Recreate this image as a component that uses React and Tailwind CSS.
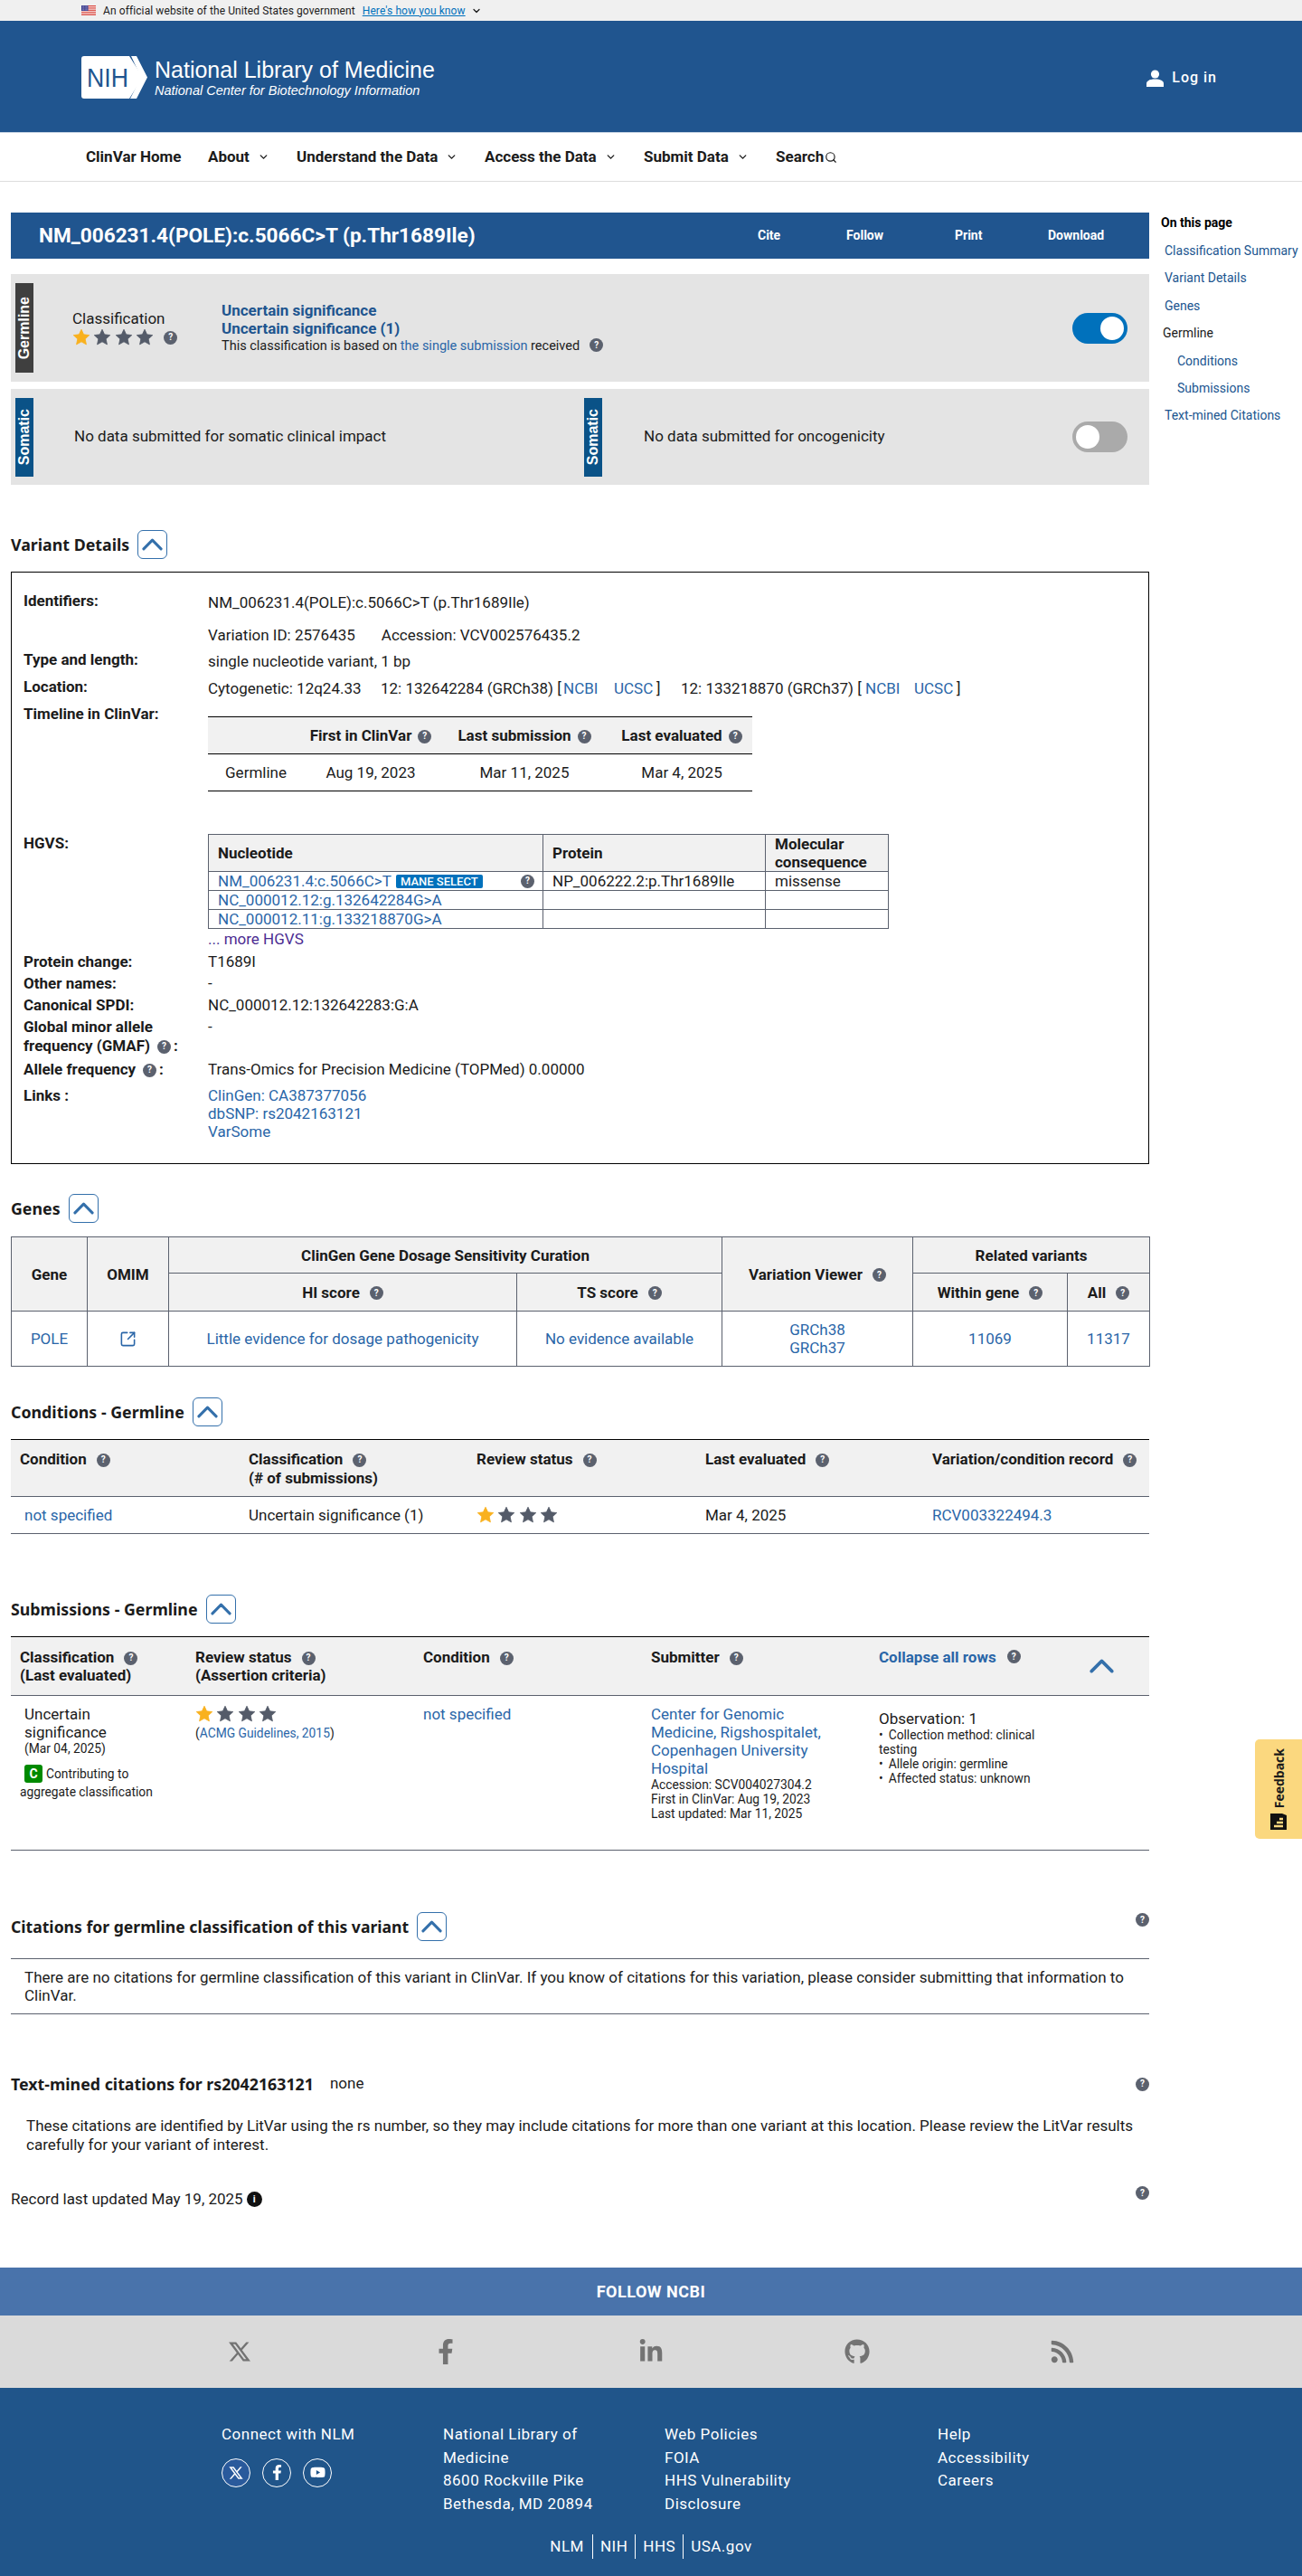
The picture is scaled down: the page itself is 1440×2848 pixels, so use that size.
import { ChevronDown, Search, SquareArrowOutUpRight } from "lucide-react"
import { FaFacebookF, FaGithub, FaLinkedinIn, FaRss, FaYoutube } from "react-icons/fa"
import { RiTwitterXLine } from "react-icons/ri"

const link = "text-[#2a66a8]"

function Help({ className = "" }) {
  return (
    <span className={`inline-flex h-[15px] w-[15px] shrink-0 items-center justify-center rounded-full bg-[#5b616e] align-[2px] text-[10px] leading-none font-bold text-white ${className}`}>
      ?
    </span>
  )
}

function Star({ on }) {
  const color = on ? "#f9b11e" : "#545b69"
  return (
    <svg viewBox="0 0 24 24" className="h-[20px] w-[20px]" fill={color} stroke={color} strokeWidth="1" strokeLinejoin="round">
      <path d="M12 1.5l3.1 6.7 7.4.9-5.5 5.1 1.5 7.2L12 17.8l-6.5 3.6L7 14.2 1.5 9.1l7.4-.9z" />
    </svg>
  )
}

function Stars() {
  return (
    <span className="inline-flex gap-[3.4px]">
      <Star on />
      <Star />
      <Star />
      <Star />
    </span>
  )
}

function UpChevron({ className = "" }) {
  return (
    <svg viewBox="0 0 24 14" className={className} fill="none" stroke="#3470ab" strokeWidth="3.2" strokeLinecap="round" strokeLinejoin="round">
      <path d="M2 12L12 2l10 10" />
    </svg>
  )
}

function SectionHeading({ title, className = "", titleSize = "text-[17.8px]" }) {
  return (
    <div className={`flex h-[32px] items-center ${className}`}>
      <h2 className={`font-['Noto_Sans',sans-serif] font-bold text-[#1b1b1b] ${titleSize}`}>{title}</h2>
      <button className="ml-[9px] flex h-[32px] w-[33px] items-center justify-center rounded-[6px] border border-[#3470ab]">
        <UpChevron className="h-[14px] w-[23px]" />
      </button>
    </div>
  )
}

function Tag({ children, className }) {
  return (
    <div className={`flex w-[20px] shrink-0 items-center justify-center ${className}`}>
      <span className="rotate-180 font-['Liberation_Sans',sans-serif] text-[16px] font-bold text-white [writing-mode:vertical-rl]">{children}</span>
    </div>
  )
}

function Toggle({ on }) {
  return (
    <div className={`flex h-[34px] w-[61px] items-center rounded-full px-[4px] ${on ? "justify-end bg-[#0071bc]" : "justify-start bg-[#aaaaaa]"}`}>
      <div className="h-[26px] w-[26px] rounded-full bg-white" />
    </div>
  )
}

function Row({ label, mt = "", labelClass = "", children }) {
  return (
    <div className={`grid grid-cols-[204px_1fr] leading-[20px] ${mt}`}>
      <div className={`font-bold ${labelClass}`}>{label}</div>
      <div>{children}</div>
    </div>
  )
}

function UsaFlag() {
  return (
    <svg viewBox="0 0 16 11" className="h-[11px] w-[16px]">
      <rect width="16" height="11" fill="#fff" />
      <path d="M0 .5h16M0 2.2h16M0 3.9h16M0 5.6h16M0 7.3h16M0 9h16M0 10.6h16" stroke="#d5352c" strokeWidth=".9" />
      <rect width="7.5" height="6" fill="#3b3b8f" />
      <path d="M1 1.2h6M1 3h6M1 4.8h6" stroke="#fff" strokeWidth=".6" strokeDasharray=".7 .7" />
    </svg>
  )
}

function NihLogo() {
  return (
    <svg viewBox="0 0 73 47" className="h-[47px] w-[73px] shrink-0">
      <path d="M3 0h50l15 23.5L53 47H3a3 3 0 0 1-3-3V3a3 3 0 0 1 3-3z" fill="#fff" />
      <path d="M55 0h6l12 23.5L61 47h-7l12-23.5z" fill="#fff" />
      <text x="6" y="34" fontFamily="Liberation Sans, sans-serif" fontSize="29" fill="#20558f" textLength="46" lengthAdjust="spacingAndGlyphs">
        NIH
      </text>
    </svg>
  )
}

function NavItem({ children, width }) {
  return (
    <div className={`flex items-center ${width}`}>
      <span>{children}</span>
      <ChevronDown size={13} strokeWidth={2.5} className="ml-[9px]" />
    </div>
  )
}

function Header() {
  return (
    <>
      <div className="flex h-[23px] items-center bg-[#f0f0f0] pl-[90px] text-[12px] text-[#1b1b1b]">
        <UsaFlag />
        <span className="ml-[8px] tracking-[0.1px]">An official website of the United States government</span>
        <a className="ml-[8px] tracking-[0.1px] text-[#0071bc] underline">Here's how you know</a>
        <ChevronDown size={12} strokeWidth={2.5} className="ml-[6px]" />
      </div>
      <div className="flex h-[124px] items-center justify-between border-b border-[#c9d6e4] bg-[#20558f] pr-[94px] pl-[90px]">
        <div className="flex items-center pt-[2px]">
          <NihLogo />
          <div className="ml-[8px] font-['Liberation_Sans',sans-serif] text-white">
            <div className="text-[25px] leading-[28px]">National Library of Medicine</div>
            <div className="text-[14.5px] leading-[18px] italic">National Center for Biotechnology Information</div>
          </div>
        </div>
        <div className="flex items-center pt-[3px] text-[16px] font-medium tracking-[1px] text-white">
          <svg viewBox="0 0 19 19" className="h-[19px] w-[19px]" fill="#fff">
            <circle cx="9.5" cy="5" r="4.6" />
            <path d="M0 19v-3.5C0 12 4 10.5 9.5 10.5S19 12 19 15.5V19z" />
          </svg>
          <span className="ml-[9px]">Log in</span>
        </div>
      </div>
      <nav className="flex h-[54px] items-center border-b border-[#dddddd] pl-[95px] text-[17px] font-bold text-[#1b1b1b]">
        <div className="w-[135px]">ClinVar Home</div>
        <NavItem width="w-[98px]">About</NavItem>
        <NavItem width="w-[208px]">Understand the Data</NavItem>
        <NavItem width="w-[176px]">Access the Data</NavItem>
        <NavItem width="w-[146px]">Submit Data</NavItem>
        <div className="flex items-center">
          <span>Search</span>
          <Search size={14} strokeWidth={2} className="ml-[1px]" />
        </div>
      </nav>
    </>
  )
}

function SideNav() {
  return (
    <aside className="ml-[13px] w-[156px] text-[14px] text-[#20558f]">
      <div className="flex h-[22px] items-center font-bold text-black">On this page</div>
      <ul className="mt-[10px] space-y-[10.4px] pl-[4px] leading-[20px]">
        <li>Classification Summary</li>
        <li>Variant Details</li>
        <li>Genes</li>
        <li className="-ml-[2px] text-[#1b1b1b]">Germline</li>
        <li className="pl-[14px]">Conditions</li>
        <li className="pl-[14px]">Submissions</li>
        <li>Text-mined Citations</li>
      </ul>
    </aside>
  )
}

function ClassificationPanels() {
  return (
    <>
      <div className="mt-[17px] flex h-[119px] items-center bg-[#e4e4e4] pr-[24px] pl-[5px]">
        <Tag className="h-[99px] bg-[#3f3f3f]">Germline</Tag>
        <div className="ml-[43px] w-[165px] leading-[20px]">
          <div>Classification</div>
          <div className="mt-[1px] flex items-center">
            <Stars />
            <Help className="ml-[11px]" />
          </div>
        </div>
        <div className="leading-[20px]">
          <div className="font-bold text-[#20558f]">Uncertain significance</div>
          <div className="font-bold text-[#20558f]">Uncertain significance (1)</div>
          <div className="text-[14.5px]">
            This classification is based on <a className={link}>the single submission</a> received
            <Help className="ml-[11px]" />
          </div>
        </div>
        <div className="ml-auto">
          <Toggle on />
        </div>
      </div>
      <div className="mt-[8px] flex h-[106px] items-center bg-[#e4e4e4] pr-[24px] pl-[5px]">
        <Tag className="h-[87px] bg-[#0a5287]">Somatic</Tag>
        <div className="ml-[45px] w-[564px]">No data submitted for somatic clinical impact</div>
        <Tag className="h-[87px] bg-[#0a5287]">Somatic</Tag>
        <div className="ml-[46px]">No data submitted for oncogenicity</div>
        <div className="ml-auto">
          <Toggle />
        </div>
      </div>
    </>
  )
}

function VariantDetails() {
  const th = "bg-[#f1f1f1] font-bold text-center"
  const cell = "border border-[#5b616e] px-[10px] text-left"
  return (
    <div className="mt-[14px] h-[655px] border border-black px-[13px] pt-[23px]">
      <Row label="Identifiers:" labelClass="-mt-[2px]">
        <div>NM_006231.4(POLE):c.5066C&gt;T (p.Thr1689Ile)</div>
        <div className="mt-[16px]">
          Variation ID: 2576435<span className="ml-[29px]">Accession: VCV002576435.2</span>
        </div>
      </Row>
      <Row label="Type and length:" mt="mt-[9px]" labelClass="-mt-[2px]">
        single nucleotide variant, 1 bp
      </Row>
      <Row label="Location:" mt="mt-[10px]" labelClass="-mt-[2px]">
        <div className="flex whitespace-pre">
          <span className="w-[191px]">Cytogenetic: 12q24.33</span>
          <span className="w-[202px]">12: 132642284 (GRCh38) [</span>
          <a className={`w-[56px] ${link}`}>NCBI</a>
          <a className={`w-[47px] ${link}`}>UCSC</a>
          <span className="w-[27px]">]</span>
          <span className="w-[204px]">12: 133218870 (GRCh37) [</span>
          <a className={`w-[54px] ${link}`}>NCBI</a>
          <a className={`w-[47px] ${link}`}>UCSC</a>
          <span>]</span>
        </div>
      </Row>
      <Row label="Timeline in ClinVar:" mt="mt-[10px]" labelClass="-mt-[2px]">
        <table className="mt-[11px] w-[602px] table-fixed border-collapse text-center">
          <colgroup>
            <col className="w-[106px]" />
            <col className="w-[148px]" />
            <col className="w-[192px]" />
            <col className="w-[156px]" />
          </colgroup>
          <thead>
            <tr className="h-[41px] border-y border-black">
              <th className={th}></th>
              <th className={th}>
                First in ClinVar
                <Help className="ml-[7px]" />
              </th>
              <th className={th}>
                Last submission
                <Help className="ml-[7px]" />
              </th>
              <th className={th}>
                Last evaluated
                <Help className="ml-[7px]" />
              </th>
            </tr>
          </thead>
          <tbody>
            <tr className="h-[41px] border-b border-black">
              <td>Germline</td>
              <td>Aug 19, 2023</td>
              <td>Mar 11, 2025</td>
              <td>Mar 4, 2025</td>
            </tr>
          </tbody>
        </table>
      </Row>
      <Row label="HGVS:" mt="mt-[47px]">
        <table className="w-[752px] table-fixed border-collapse">
          <colgroup>
            <col className="w-[370px]" />
            <col className="w-[246px]" />
            <col className="w-[136px]" />
          </colgroup>
          <thead>
            <tr className="h-[41px]">
              <th className={`${cell} ${th} !text-left`}>Nucleotide</th>
              <th className={`${cell} ${th} !text-left`}>Protein</th>
              <th className={`${cell} ${th} !text-left`}>Molecular consequence</th>
            </tr>
          </thead>
          <tbody>
            <tr className="h-[21px]">
              <td className={cell}>
                <div className="flex items-center">
                  <a className={link}>NM_006231.4:c.5066C&gt;T</a>
                  <span className="ml-[5px] flex h-[15px] w-[96px] items-center justify-center rounded-[2px] bg-[#0071bc] text-[13px] leading-none font-medium text-white">MANE SELECT</span>
                  <Help className="mr-[-1px] ml-auto" />
                </div>
              </td>
              <td className={cell}>NP_006222.2:p.Thr1689Ile</td>
              <td className={cell}>missense</td>
            </tr>
            <tr className="h-[21px]">
              <td className={cell}>
                <a className={link}>NC_000012.12:g.132642284G&gt;A</a>
              </td>
              <td className={cell}></td>
              <td className={cell}></td>
            </tr>
            <tr className="h-[21px]">
              <td className={cell}>
                <a className={link}>NC_000012.11:g.133218870G&gt;A</a>
              </td>
              <td className={cell}></td>
              <td className={cell}></td>
            </tr>
          </tbody>
        </table>
        <div className="mt-[1px] text-[#4c2c92]">... more HGVS</div>
      </Row>
      <Row label="Protein change:" mt="mt-[5px]">
        T1689I
      </Row>
      <Row label="Other names:" mt="mt-[4px]">
        -
      </Row>
      <Row label="Canonical SPDI:" mt="mt-[4px]">
        NC_000012.12:132642283:G:A
      </Row>
      <Row
        label={
          <div className="leading-[21px]">
            Global minor allele
            <br />
            frequency (GMAF)
            <Help className="mr-[3px] ml-[8px]" />:
          </div>
        }
        mt="mt-[4px]"
      >
        -
      </Row>
      <Row
        label={
          <>
            Allele frequency
            <Help className="mr-[3px] ml-[8px]" />:
          </>
        }
        mt="mt-[5px]"
      >
        Trans-Omics for Precision Medicine (TOPMed) 0.00000
      </Row>
      <Row label="Links :" mt="mt-[9px]">
        <div className={link}>ClinGen: CA387377056</div>
        <div className={link}>dbSNP: rs2042163121</div>
        <div className={link}>VarSome</div>
      </Row>
    </div>
  )
}

function GenesTable() {
  const th = "border border-[#5b616e] bg-[#f1f1f1] font-bold"
  const td = `border border-[#5b616e] ${link}`
  return (
    <table className="mt-[15px] w-[1259px] table-fixed border-collapse text-center leading-[20px]">
      <colgroup>
        <col className="w-[84px]" />
        <col className="w-[90px]" />
        <col className="w-[385px]" />
        <col className="w-[227px]" />
        <col className="w-[211px]" />
        <col className="w-[171px]" />
        <col className="w-[91px]" />
      </colgroup>
      <thead>
        <tr className="h-[40px]">
          <th rowSpan={2} className={th}>Gene</th>
          <th rowSpan={2} className={th}>OMIM</th>
          <th colSpan={2} className={th}>ClinGen Gene Dosage Sensitivity Curation</th>
          <th rowSpan={2} className={th}>
            Variation Viewer
            <Help className="ml-[11px]" />
          </th>
          <th colSpan={2} className={th}>Related variants</th>
        </tr>
        <tr className="h-[42px]">
          <th className={th}>
            HI score
            <Help className="ml-[11px]" />
          </th>
          <th className={th}>
            TS score
            <Help className="ml-[11px]" />
          </th>
          <th className={th}>
            Within gene
            <Help className="ml-[11px]" />
          </th>
          <th className={th}>
            All
            <Help className="ml-[11px]" />
          </th>
        </tr>
      </thead>
      <tbody>
        <tr className="h-[61px]">
          <td className={td}>POLE</td>
          <td className={td}>
            <SquareArrowOutUpRight size={19} strokeWidth={2} className="mx-auto" color="#2a66a8" />
          </td>
          <td className={td}>Little evidence for dosage pathogenicity</td>
          <td className={td}>No evidence available</td>
          <td className={td}>
            GRCh38
            <br />
            GRCh37
          </td>
          <td className={td}>11069</td>
          <td className={td}>11317</td>
        </tr>
      </tbody>
    </table>
  )
}

function ConditionsTable() {
  const th = "pt-[11px] align-top font-bold text-left"
  return (
    <table className="mt-[14px] w-[1259px] table-fixed border-collapse leading-[21px]">
      <colgroup>
        <col className="w-[263px]" />
        <col className="w-[252px]" />
        <col className="w-[253px]" />
        <col className="w-[251px]" />
        <col className="w-[240px]" />
      </colgroup>
      <thead>
        <tr className="h-[63px] border-t border-b border-t-black border-b-[#5b616e] bg-[#f1f1f1]">
          <th className={`${th} pl-[10px]`}>
            Condition
            <Help className="ml-[11px]" />
          </th>
          <th className={th}>
            Classification
            <Help className="ml-[11px]" />
            <br />
            (# of submissions)
          </th>
          <th className={th}>
            Review status
            <Help className="ml-[11px]" />
          </th>
          <th className={th}>
            Last evaluated
            <Help className="ml-[11px]" />
          </th>
          <th className={th}>
            Variation/condition record
            <Help className="ml-[11px]" />
          </th>
        </tr>
      </thead>
      <tbody>
        <tr className="h-[41px] border-b border-[#5b616e]">
          <td className={`pl-[15px] ${link}`}>not specified</td>
          <td>Uncertain significance (1)</td>
          <td>
            <div className="flex items-center">
              <Stars />
            </div>
          </td>
          <td>Mar 4, 2025</td>
          <td className={link}>RCV003322494.3</td>
        </tr>
      </tbody>
    </table>
  )
}

function SubmissionsTable() {
  const th = "pt-[12px] align-top font-bold text-left"
  return (
    <table className="mt-[14px] w-[1259px] table-fixed border-collapse leading-[20px]">
      <colgroup>
        <col className="w-[204px]" />
        <col className="w-[252px]" />
        <col className="w-[252px]" />
        <col className="w-[252px]" />
        <col className="w-[299px]" />
      </colgroup>
      <thead>
        <tr className="h-[65px] border-t border-b border-t-black border-b-[#5b616e] bg-[#f1f1f1]">
          <th className={`${th} pl-[10px]`}>
            Classification
            <Help className="ml-[11px]" />
            <br />
            (Last evaluated)
          </th>
          <th className={th}>
            Review status
            <Help className="ml-[11px]" />
            <br />
            (Assertion criteria)
          </th>
          <th className={th}>
            Condition
            <Help className="ml-[11px]" />
          </th>
          <th className={th}>
            Submitter
            <Help className="ml-[11px]" />
          </th>
          <th className={th}>
            <div className="flex items-start">
              <span className="text-[#2a66a8]">Collapse all rows</span>
              <Help className="mt-[2px] ml-[12px]" />
              <UpChevron className="mt-[10px] mr-[39px] ml-auto h-[20px] w-[27px]" />
            </div>
          </th>
        </tr>
      </thead>
      <tbody>
        <tr className="h-[171px] border-b border-[#5b616e] align-top">
          <td className="pt-[10px] pl-[15px]">
            <div className="w-[120px]">Uncertain significance</div>
            <div className="text-[13.8px] leading-[16px]">(Mar 04, 2025)</div>
            <div className="mt-[10px] -ml-[5px] text-[13.8px] leading-[20px]">
              <span className="ml-[5px] inline-flex h-[20px] w-[20px] items-center justify-center rounded-[3px] bg-[#008a00] text-[14px] font-bold text-white">C</span>
              <span className="ml-[4px]">Contributing to</span>
              <br />
              aggregate classification
            </div>
          </td>
          <td className="pt-[10px]">
            <Stars />
            <div className="-mt-[2px] text-[13.8px] leading-[18px]">
              (<a className={link}>ACMG Guidelines, 2015</a>)
            </div>
          </td>
          <td className={`pt-[10px] ${link}`}>not specified</td>
          <td className="pt-[10px]">
            <div className={`w-[200px] ${link}`}>Center for Genomic Medicine, Rigshospitalet, Copenhagen University Hospital</div>
            <div className="text-[13.8px] leading-[16px]">
              Accession: SCV004027304.2
              <br />
              First in ClinVar: Aug 19, 2023
              <br />
              Last updated: Mar 11, 2025
            </div>
          </td>
          <td className="pt-[15px]">
            <div>Observation: 1</div>
            <div className="w-[185px] text-[13.8px] leading-[16px]">
              <div>
                <span className="mr-[6px]">•</span>Collection method: clinical testing
              </div>
              <div>
                <span className="mr-[6px]">•</span>Allele origin: germline
              </div>
              <div>
                <span className="mr-[6px]">•</span>Affected status: unknown
              </div>
            </div>
          </td>
        </tr>
      </tbody>
    </table>
  )
}

function Citations() {
  return (
    <>
      <div className="mt-[68px] flex items-start justify-between">
        <SectionHeading title="Citations for germline classification of this variant" titleSize="text-[17.6px]" />
        <Help className="mt-[1px]" />
      </div>
      <div className="mt-[19px] border-y border-[#5b616e] py-[10px] pr-[10px] pl-[15px] leading-[20px]">
        There are no citations for germline classification of this variant in ClinVar. If you know of citations for this variation, please consider submitting that information to ClinVar.
      </div>
      <div className="mt-[65px] flex h-[24px] items-center justify-between">
        <div className="flex items-center">
          <h2 className="font-['Noto_Sans',sans-serif] text-[17.8px] font-bold">Text-mined citations for rs2042163121</h2>
          <span className="ml-[18px]">none</span>
        </div>
        <Help />
      </div>
      <p className="mt-[24px] pr-[4px] pl-[17px] leading-[20.5px]">
        These citations are identified by LitVar using the rs number, so they may include citations for more than one variant at this location. Please review the LitVar results carefully for your variant of interest.
      </p>
      <div className="mt-[36px] flex h-[24px] items-start justify-between">
        <div className="flex items-center pt-[2px]">
          Record last updated May 19, 2025
          <span className="ml-[4px] flex h-[17px] w-[17px] items-center justify-center rounded-full bg-[#111] text-[11px] font-bold text-white">i</span>
        </div>
        <Help />
      </div>
    </>
  )
}

function Footer() {
  const social = "text-[#737373]"
  return (
    <footer className="mt-[66px]">
      <div className="flex h-[53px] items-center justify-center bg-[#4973ab] text-[18px] font-bold tracking-[0.5px] text-white">FOLLOW NCBI</div>
      <div className="flex h-[80px] items-center justify-between bg-[#dadada] pr-[251px] pl-[251px]">
        <RiTwitterXLine size={28} className={social} />
        <FaFacebookF size={28} className={social} />
        <FaLinkedinIn size={28} className={social} />
        <FaGithub size={28} className={social} />
        <FaRss size={28} className={social} />
      </div>
      <div className="h-[208px] bg-[#20558a] pt-[39px] text-[17px] leading-[25.6px] tracking-[0.5px] text-white">
        <div className="flex pl-[245px]">
          <div className="w-[245px]">
            <div>Connect with NLM</div>
            <div className="mt-[13px] flex gap-[13px]">
              <span className="flex h-[32px] w-[32px] items-center justify-center rounded-full border border-white bg-[#2a5a9c]">
                <RiTwitterXLine size={18} />
              </span>
              <span className="flex h-[32px] w-[32px] items-center justify-center rounded-full border border-white">
                <FaFacebookF size={17} />
              </span>
              <span className="flex h-[32px] w-[32px] items-center justify-center rounded-full border border-white">
                <FaYoutube size={17} />
              </span>
            </div>
          </div>
          <div className="w-[245px]">
            <div className="w-[190px]">National Library of Medicine</div>
            <div>8600 Rockville Pike</div>
            <div>Bethesda, MD 20894</div>
          </div>
          <div className="w-[302px]">
            <div>Web Policies</div>
            <div>FOIA</div>
            <div className="w-[175px]">HHS Vulnerability Disclosure</div>
          </div>
          <div>
            <div>Help</div>
            <div>Accessibility</div>
            <div>Careers</div>
          </div>
        </div>
        <div className="mt-[21px] flex h-[27px] justify-center leading-[27px]">
          <span className="pr-[9px]">NLM</span>
          <span className="border-l border-white px-[8px]">NIH</span>
          <span className="border-l border-white px-[8px]">HHS</span>
          <span className="border-l border-white pl-[8px]">USA.gov</span>
        </div>
      </div>
    </footer>
  )
}

export default function App() {
  return (
    <div className="relative font-['Roboto',sans-serif] text-[#1b1b1b]">
      <Header />
      <div className="flex pt-[34px] text-[17px]">
        <main className="ml-[12px] w-[1259px]">
          <div className="flex h-[51px] items-center justify-between bg-[#20558f] pl-[31px] font-bold text-white">
            <h1 className="text-[22.6px]">NM_006231.4(POLE):c.5066C&gt;T (p.Thr1689Ile)</h1>
            <div className="flex text-[14px]">
              <span className="w-[98px]">Cite</span>
              <span className="w-[120px]">Follow</span>
              <span className="w-[103px]">Print</span>
              <span className="w-[112px]">Download</span>
            </div>
          </div>
          <ClassificationPanels />
          <SectionHeading title="Variant Details" className="mt-[50px]" />
          <VariantDetails />
          <SectionHeading title="Genes" className="mt-[33px]" />
          <GenesTable />
          <SectionHeading title="Conditions - Germline" className="mt-[34px]" />
          <ConditionsTable />
          <SectionHeading title="Submissions - Germline" className="mt-[67px]" />
          <SubmissionsTable />
          <Citations />
        </main>
        <SideNav />
      </div>
      <Footer />
      <div className="absolute top-[1923px] right-0 flex h-[110px] w-[52px] flex-col items-center justify-center gap-[6px] rounded-l-[5px] bg-[#fbd87f]">
        <span className="rotate-180 font-['Open_Sans',sans-serif] text-[14px] font-bold text-[#1b1b1b] [writing-mode:vertical-rl]">Feedback</span>
        <svg viewBox="0 0 18 18" className="h-[18px] w-[18px] -rotate-90">
          <path d="M0 0h18v13l-2 5H0z" fill="#111" />
          <path d="M4 4v10M8 7v7M12 10v4" stroke="#fbd87f" strokeWidth="2.4" />
        </svg>
      </div>
    </div>
  )
}
